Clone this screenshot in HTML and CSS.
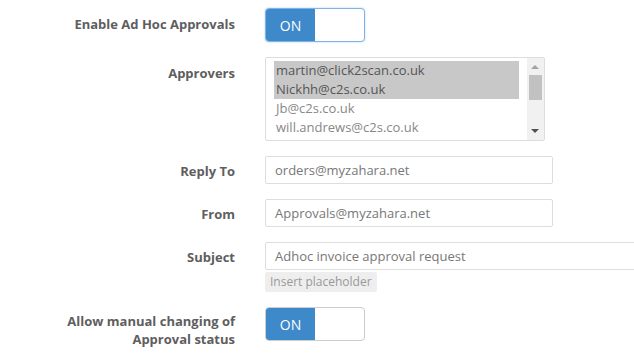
FILE: index.html
```html
<!DOCTYPE html>
<html>
<head>
<meta charset="utf-8">
<link rel="stylesheet" href="styles.css">
</head>
<body>
<form class="form">
  <div class="row r-toggle">
    <label class="label lbl-toggle">Enable Ad Hoc Approvals</label>
    <div class="control">
      <div class="switch focused"><span class="on">ON</span><span class="off"></span></div>
    </div>
  </div>
  <div class="row r-select">
    <label class="label lbl-select">Approvers</label>
    <div class="control">
      <div class="multi">
        <ul class="options">
          <li class="opt selected">martin@click2scan.co.uk</li>
          <li class="opt selected">Nickhh@c2s.co.uk</li>
          <li class="opt">Jb@c2s.co.uk</li>
          <li class="opt">will.andrews@c2s.co.uk</li>
        </ul>
        <div class="scrollbar">
          <span class="arrow up"></span>
          <span class="thumb"></span>
          <span class="arrow down"></span>
        </div>
      </div>
    </div>
  </div>
  <div class="row r-input">
    <label class="label lbl-input">Reply To</label>
    <div class="control"><div class="input">orders@myzahara.net</div></div>
  </div>
  <div class="row r-input">
    <label class="label lbl-input">From</label>
    <div class="control"><div class="input">Approvals@myzahara.net</div></div>
  </div>
  <div class="row r-input">
    <label class="label lbl-input">Subject</label>
    <div class="control">
      <div class="input wide">Adhoc invoice approval request</div>
      <div class="ph-btn">Insert placeholder</div>
    </div>
  </div>
  <div class="row r-toggle2">
    <label class="label lbl-toggle2">Allow manual changing of Approval status</label>
    <div class="control">
      <div class="switch"><span class="on">ON</span><span class="off"></span></div>
    </div>
  </div>
</form>
</body>
</html>
```
FILE: styles.css
```css
* { box-sizing: border-box; }
html, body { margin: 0; padding: 0; background: #fff; overflow: hidden; }
body { font-family: "Open Sans", "Noto Sans", sans-serif; font-size: 13px; color: #666; }
.form { padding-top: 8px; }
.row { display: grid; grid-template-columns: 235px 1fr; column-gap: 30px; }
.label { text-align: right; font-weight: 700; color: #5e5e5e; font-size: 13px; line-height: 18px; }
.r-toggle { margin-bottom: 15px; }
.lbl-toggle { padding-top: 7px; }
.r-select { margin-bottom: 15px; }
.lbl-select { padding-top: 7px; }
.r-input { margin-bottom: 15px; }
.lbl-input { padding-top: 6px; }
.lbl-toggle2 { padding-top: 5px; padding-left: 60px; }

.switch { width: 100px; height: 34px; border: 1px solid #ccc; border-radius: 4px; display: flex; overflow: hidden; background: #fff; }
.switch.focused { border-color: #7fb3e6; box-shadow: 0 0 2px rgba(102,175,233,0.6); }
.switch .on { width: 49px; background: #3d89c9; color: #fff; font-size: 14px; display: flex; align-items: center; justify-content: center; }
.switch .off { flex: 1; }

.multi { width: 280px; height: 84px; border: 1px solid #ddd; border-radius: 2px; display: flex; padding: 3px 0 3px 8px; position: relative; }
.options { list-style: none; margin: 0; padding: 0; flex: 1; }
.opt { height: 19px; line-height: 19px; padding-left: 2px; color: #888; font-size: 13px; margin-right: 8px; }
.opt.selected { background: #c8c8c8; color: #555; }
.scrollbar { width: 17px; margin-top: -3px; margin-bottom: -3px; background: #f1f1f1; position: relative; }
.thumb { position: absolute; left: 2px; right: 2px; top: 17px; height: 25px; background: #c1c1c1; }
.arrow { position: absolute; left: 4px; width: 0; height: 0; border-left: 4px solid transparent; border-right: 4px solid transparent; }
.arrow.up { top: 7px; border-bottom: 4px solid #a3a3a3; }
.arrow.down { bottom: 7px; border-top: 4px solid #505050; }

.input { width: 288px; height: 28px; border: 1px solid #ddd; border-radius: 2px; padding: 0 9px; line-height: 26px; color: #777; font-size: 13px; }
.input.wide { width: 400px; }
.ph-btn { display: block; width: fit-content; margin-top: 2px; height: 20px; line-height: 20px; padding: 0 5px; background: #eee; border-radius: 2px; color: #999; font-size: 12px; }
```
